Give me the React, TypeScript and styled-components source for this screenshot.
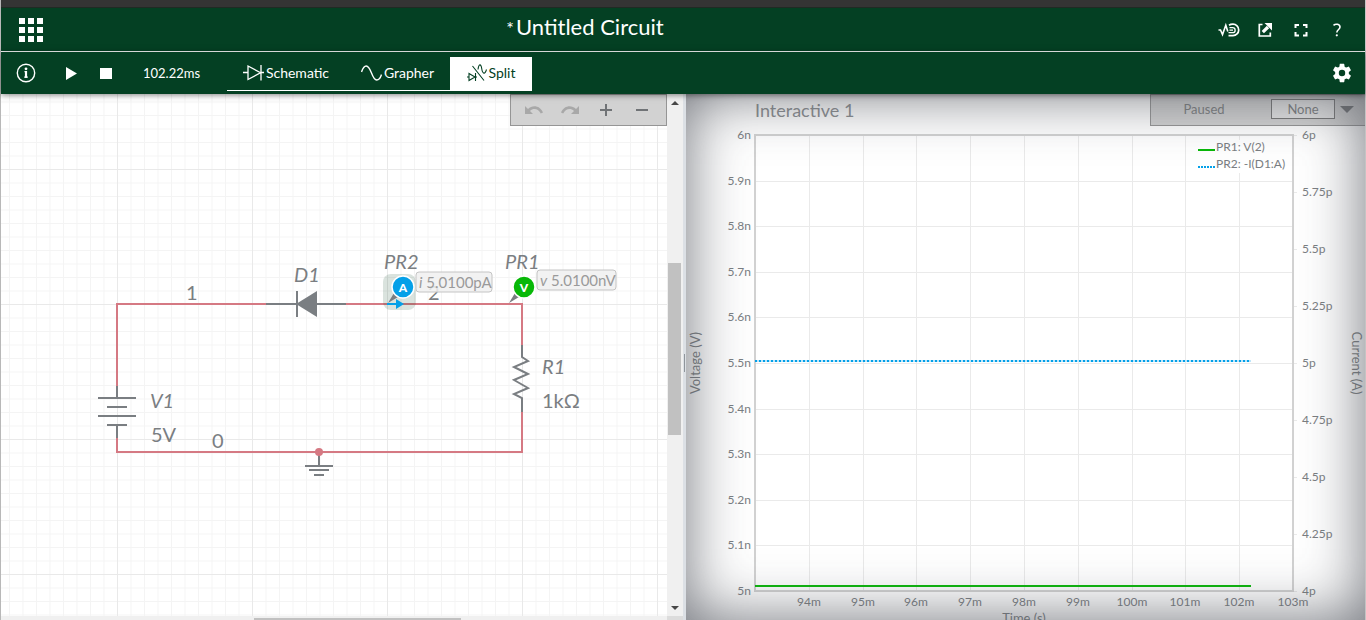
import React, { useLayoutEffect, useRef, useState } from "react";
import styled, { createGlobalStyle, css } from "styled-components";

const GREEN = "#044023";
const INK = "#7a7e82";
const WIRE = "#d57983";
const FONT = '"Lato", "Liberation Sans", sans-serif';

const GlobalStyle = createGlobalStyle`
  * { box-sizing: border-box; }
  html, body, #root { height: 100%; margin: 0; }
  body { font-family: ${FONT}; overflow: hidden; background: #fff; }
  button, select { font-family: inherit; }
`;

const Page = styled.div`
  display: flex;
  flex-direction: column;
  height: 100vh;
  border-left: 1px solid #b8b8b8;
  border-right: 1px solid #c4c4c4;
`;

const WindowEdge = styled.div`
  flex: none;
  height: 8px;
  background: #343434;
  border-bottom: 1px solid #202a24;
`;

const Header = styled.header`
  flex: none;
  display: flex;
  align-items: center;
  height: 44px;
  background: ${GREEN};
  border-bottom: 1px solid #fff;
  color: #fff;
`;

const IconButton = styled.button<{ $w?: number }>`
  display: flex;
  align-items: center;
  justify-content: center;
  flex: none;
  width: ${(p) => p.$w ?? 36}px;
  height: 30px;
  padding: 0;
  border: 0;
  background: none;
  color: inherit;
`;

const Title = styled.h1`
  flex: 1;
  display: flex;
  justify-content: center;
  align-items: baseline;
  gap: 2px;
  margin: 0;
  font-size: 22px;
  line-height: 28px;
  font-weight: 400;
  padding-bottom: 4px;
`;

const Unsaved = styled.span`
  font-size: 18px;
`;

const HeaderActions = styled.nav`
  display: flex;
  justify-content: flex-end;
  width: 256px;
  padding-right: 10px;
`;

const Toolbar = styled.div`
  flex: none;
  display: flex;
  align-items: center;
  height: 42px;
  background: ${GREEN};
  color: #fff;
  position: relative;
  z-index: 3;
  box-shadow: 0 1px 6px rgba(0, 0, 0, 0.5);
`;

const RunTime = styled.output`
  width: 106px;
  padding-left: 22px;
  font-size: 13px;
  line-height: 20px;
`;

const Tabs = styled.div`
  display: flex;
  height: 34px;
  margin-top: 2px;
`;

const Tab = styled.button<{ $active?: boolean; $w: number }>`
  display: flex;
  align-items: center;
  justify-content: center;
  gap: 2px;
  width: ${(p) => p.$w}px;
  padding: 0 0 2px;
  border: 0;
  border-bottom: 1px solid #fff;
  font-size: 14px;
  line-height: 20px;
  ${(p) =>
    p.$active
      ? css`
          background: #fff;
          color: ${GREEN};
        `
      : css`
          background: none;
          color: #fff;
        `}
`;

const Spacer = styled.div`
  flex: 1;
`;

const Workspace = styled.main`
  flex: 1;
  min-height: 0;
  display: grid;
  grid-template-columns: minmax(0, 682fr) 3px minmax(0, 679fr);
`;

const SchematicPane = styled.section`
  position: relative;
  display: grid;
  grid-template-columns: minmax(0, 1fr) 16px;
  grid-template-rows: minmax(0, 1fr) 4px;
`;

const Canvas = styled.svg`
  display: block;
  width: 100%;
  height: 100%;
`;

const FloatingTools = styled.div`
  position: absolute;
  top: 0;
  right: 16px;
  display: flex;
  height: 32px;
  padding: 0 6px 0 5px;
  background: #d2d2d2;
  border: 1px solid #959595;
  color: #707376;
`;

const VerticalTrack = styled.div`
  display: flex;
  flex-direction: column;
  align-items: center;
  padding-right: 1px;
  background: #f0f0f0;
`;

const ScrollArrow = styled.button`
  display: flex;
  align-items: center;
  justify-content: center;
  width: 14px;
  height: 17px;
  padding: 0;
  border: 0;
  background: none;
  color: #484848;
`;

const ScrollGap = styled.div<{ $grow: number }>`
  flex: ${(p) => p.$grow} 1 0;
`;

const VerticalThumb = styled.div`
  flex: 172 1 0;
  width: 13px;
  background: #c1c1c1;
`;

const HorizontalTrack = styled.div`
  display: flex;
  padding-top: 2px;
  background: #f0f0f0;
`;

const HorizontalThumb = styled.div`
  flex: 207 1 0;
  background: #c1c1c1;
`;

const ScrollCorner = styled.div`
  background: #dcdcdc;
`;

const Splitter = styled.div`
  display: flex;
  align-items: center;
  justify-content: center;
  background: #dce0e5;
`;

const SplitterGrip = styled.div`
  width: 1px;
  height: 18px;
  margin-bottom: -12px;
  background: #8f959b;
`;

const GraphPane = styled.section`
  position: relative;
  overflow: hidden;
  &::after {
    content: "";
    position: absolute;
    inset: 0;
    z-index: 2;
    pointer-events: none;
    box-shadow: inset 0 0 60px rgba(85, 88, 96, 0.85);
  }
`;

const GraphTools = styled.div`
  position: absolute;
  top: 0;
  right: 0;
  display: flex;
  align-items: center;
  width: 215px;
  height: 32px;
  padding-bottom: 2px;
  background: #d2d2d2;
  border: 1px solid #959595;
  border-right: 0;
  color: #7c7e80;
  font-size: 13px;
`;

const Status = styled.span`
  width: 120px;
  padding-right: 14px;
  text-align: center;
`;

const CursorSelect = styled.select`
  appearance: none;
  width: 64px;
  height: 20px;
  margin: 0 5px 0 0;
  padding: 0;
  border: 1px solid #777;
  border-radius: 0;
  background: #e6e6e6;
  color: #7c7e80;
  font-size: 13px;
  line-height: 18px;
  text-align: center;
  text-align-last: center;
`;

const Label = styled.text<{ $size: number; $italic?: boolean; $fill?: string }>`
  font-family: ${FONT};
  font-size: ${(p) => p.$size}px;
  font-style: ${(p) => (p.$italic ? "italic" : "normal")};
  fill: ${(p) => p.$fill ?? INK};
`;

const AppsIcon = () => (
  <svg width="24" height="24" viewBox="0 0 24 24" fill="currentColor">
    {[0, 9, 18].map((y) => [0, 9, 18].map((x) => <rect key={`${x}-${y}`} x={x} y={y} width="6" height="6" />))}
  </svg>
);

const InfoIcon = () => (
  <svg width="20" height="20" viewBox="0 0 20 20" fill="none" stroke="currentColor">
    <circle cx="10" cy="10" r="8.7" strokeWidth="1.4" />
    <path d="M8.500 8.700H10V14.200M8.200 14.200H11.800" strokeWidth="1.300" />
    <path d="M10 8V14.800" strokeWidth="2.200" />
    <circle cx="10" cy="5.800" r="1.400" fill="currentColor" stroke="none" />
  </svg>
);

const DiodeIcon = () => (
  <svg width="21" height="18" viewBox="0 0 21 18" fill="none" stroke="currentColor" strokeWidth="1.3">
    <path d="M0 8.5h5M18 8.5h3M5 2v13.5L17.5 8.7zM18 1v15.5" />
  </svg>
);

const SineIcon = () => (
  <svg width="21" height="18" viewBox="0 0 21 18" fill="none" stroke="currentColor" strokeWidth="1.4">
    <path d="M0.5 8C2 3.500 3.500 2 5.200 2C10.500 2 10.500 16 15.700 16C17.500 16 19.500 14 20.500 10.500" />
  </svg>
);

const SplitIcon = () => (
  <svg width="20" height="18" viewBox="0 0 20 18" fill="none" stroke="currentColor" strokeWidth="1.100">
    <path d="M0 13h2M2 9.500v7L8 13zM8.500 9v8M8.500 13h1.500M5.500 2L17 16.500" />
    <path d="M11 5.500C11.800 -0.500 14 -0.500 14.700 4.500C15.500 10 18 11 19.500 5.500" />
  </svg>
);

const MathIcon = () => (
  <svg width="22" height="16" viewBox="0 0 22 16" fill="none" stroke="currentColor" strokeWidth="1.600">
    <path d="M0.500 8H2.500L4.500 12.500L7.800 3.200L9.800 9.500" />
    <path d="M11 3.200C12 2.500 13.500 2.200 15 2.200a5.700 5.700 0 0 1 0 11.400H10.500" strokeWidth="1.700" />
    <path d="M11.500 5.600H14.600a2.500 2.500 0 0 1 0 5.100H10.500M11.500 8.200H15" strokeWidth="1.300" />
  </svg>
);

const ExportIcon = () => (
  <svg width="16" height="16" viewBox="0 0 16 16" fill="none" stroke="currentColor" strokeWidth="1.700">
    <path d="M5.500 2.500H2.300v11.500h11V10.500" />
    <path d="M5.800 10.200L11 5" strokeWidth="3.200" />
    <path d="M7.500 1H15V8.500z" fill="currentColor" stroke="none" />
  </svg>
);

const FullscreenIcon = () => (
  <svg width="14" height="14" viewBox="0 0 14 14" fill="none" stroke="currentColor" strokeWidth="2">
    <path d="M1.500 5V2H5M9 2h3.500v3M12.500 9v3.500H9M5 12.500H1.500V9" />
  </svg>
);

const HelpIcon = () => (
  <svg width="10" height="14" viewBox="0 0 10 14" fill="none" stroke="currentColor" strokeWidth="1.600">
    <path d="M1.500 2.300C3.500 0.600 8 0.800 8 4C8 6.500 5 6.500 4.800 9.500" />
    <circle cx="4.800" cy="12.300" r="1.100" fill="currentColor" stroke="none" />
  </svg>
);

const GearIcon = () => (
  <svg width="22" height="22" viewBox="0 0 24 24" fill="currentColor">
    <path d="M19.430 12.980c.04-.32.07-.64.07-.98s-.03-.66-.07-.98l2.110-1.650c.19-.15.24-.42.12-.64l-2-3.460c-.12-.22-.39-.3-.61-.22l-2.490 1c-.52-.4-1.080-.73-1.690-.98l-.38-2.650A.488.488 0 0 0 14 2h-4c-.25 0-.46.18-.49.42l-.38 2.650c-.61.25-1.170.59-1.690.98l-2.490-1c-.23-.09-.49 0-.61.22l-2 3.460c-.13.22-.07.49.12.64l2.110 1.650c-.04.32-.07.65-.07.98s.03.66.07.98l-2.110 1.650c-.19.15-.24.42-.12.64l2 3.460c.12.22.39.3.61.22l2.490-1c.52.4 1.080.73 1.690.98l.38 2.650c.03.24.24.42.49.42h4c.25 0 .46-.18.49-.42l.38-2.650c.61-.25 1.170-.59 1.690-.98l2.490 1c.23.09.49 0 .61-.22l2-3.460c.12-.22.07-.49-.12-.64zM12 15.500a3.500 3.500 0 1 1 0-7 3.500 3.500 0 0 1 0 7z" />
  </svg>
);

const UndoIcon = ({ flip }: { flip?: boolean }) => (
  <svg width="18" height="12" viewBox="0 0 18 12" fill="#a8a8a8">
    <g transform={flip ? "translate(18 0) scale(-1 1)" : undefined}>
      <path d="M0 2l3 3C7.500 0.500 15 1.500 18 8.500l-2.200.9C13 4.500 8.500 3.800 5 7l3 3H0z" />
    </g>
  </svg>
);

const Probe = ({ x, y, color, letter }: { x: number; y: number; color: string; letter: string }) => (
  <g>
    <path d={`M${x - 15} ${y + 16}L${x - 9} ${y + 6}l4 4z`} fill={INK} />
    <circle cx={x} cy={y} r="11" fill={color} stroke="#fff" strokeWidth="1.500" />
    <Label x={x} y={y + 5} $size={12} $fill="#fff" fontWeight="900" textAnchor="middle">
      {letter}
    </Label>
  </g>
);

const Reading = ({ x, y, w, symbol, value }: { x: number; y: number; w: number; symbol: string; value: string }) => (
  <g>
    <rect x={x} y={y} width={w} height="20" rx="3" fill="#f0f0f0" fillOpacity="0.85" stroke="#c4c4c4" />
    <Label x={x + 3} y={y + 16} $size={15} $fill="#9a9a9a">
      <tspan fontStyle="italic">{symbol}</tspan> {value}
    </Label>
  </g>
);

const Schematic = () => (
  <Canvas role="img" aria-label="Circuit schematic">
    <defs>
      <pattern id="minor" x="116" y="75" width="13.5" height="13.5" patternUnits="userSpaceOnUse">
        <path d="M0 0.500H13.500M0.500 0V13.500" stroke="#f4f4f4" strokeWidth="1" />
      </pattern>
      <pattern id="major" x="116" y="75" width="135" height="135" patternUnits="userSpaceOnUse">
        <path d="M0 0.500H135M0.500 0V135" stroke="#e9e9e9" strokeWidth="1" />
      </pattern>
    </defs>
    <rect width="100%" height="100%" fill="#fff" />
    <rect width="100%" height="100%" fill="url(#minor)" />
    <rect width="100%" height="100%" fill="url(#major)" />

    <path d="M265 210H116V292M116 344V358H521V318M521 251V210H345" fill="none" stroke={WIRE} strokeWidth="2" />
    <g fill="none" stroke={INK} strokeWidth="2">
      <path d="M116 292V304M97 304H135M106 313H126M97 322H135M106 331H126M116 331V344" />
      <path d="M265 210H345M296 197V223" />
      <path d="M521 251V263L527 267L513 273L527 280L513 286L527 294L513 300L521 304V318" />
      <path d="M318 358V372M304 372H332M308 376H328M313 381H323" />
    </g>
    <path d="M295 210L316 197V223z" fill={INK} />
    <circle cx="318" cy="358" r="4" fill={WIRE} />

    <Label x={185} y={206} $size={20}>1</Label>
    <Label x={293} y={188} $size={20} $italic>D1</Label>
    <Label x={427} y={206} $size={20}>2</Label>
    <Label x={211} y={354} $size={20}>0</Label>
    <Label x={149} y={314} $size={20} $italic>V1</Label>
    <Label x={150} y={348} $size={20}>5V</Label>
    <Label x={541} y={280} $size={20} $italic>R1</Label>
    <Label x={541} y={314} $size={20}>1kΩ</Label>
    <Label x={383} y={175} $size={20} $italic>PR2</Label>
    <Label x={504} y={175} $size={20} $italic>PR1</Label>

    <rect x="382" y="180" width="33" height="36" rx="8" fill={GREEN} fillOpacity="0.150" />
    <Probe x={402} y={193} color="#04a0e8" letter="A" />
    <path d="M386 209H395V205L403 210L395 215V211H386z" fill="#04a0e8" />
    <Probe x={523} y={193} color="#08b808" letter="V" />
    <Reading x={415} y={178} w={76} symbol="i" value="5.0100pA" />
    <Reading x={536} y={176} w={79} symbol="v" value="5.0100nV" />
  </Canvas>
);

const T_START = 93;
const T_END = 103;
const T_NOW = 102.22;
const voltageTicks = ["5n", "5.1n", "5.2n", "5.3n", "5.4n", "5.5n", "5.6n", "5.7n", "5.8n", "5.9n", "6n"];
const currentTicks = ["4p", "4.25p", "4.5p", "4.75p", "5p", "5.25p", "5.5p", "5.75p", "6p"];
const timeTicks = [94, 95, 96, 97, 98, 99, 100, 101, 102, 103];

const Grapher = () => {
  const ref = useRef<SVGSVGElement>(null);
  const [size, setSize] = useState({ w: 679, h: 526 });
  useLayoutEffect(() => {
    const el = ref.current;
    if (!el) return;
    const measure = () => setSize({ w: el.clientWidth, h: el.clientHeight });
    measure();
    const observer = new ResizeObserver(measure);
    observer.observe(el);
    return () => observer.disconnect();
  }, []);

  const left = 69;
  const right = size.w - 72;
  const top = 41;
  const bottom = size.h - 29;
  const tx = (t: number) => Math.round(left + ((t - T_START) / (T_END - T_START)) * (right - left));
  const fy = (f: number) => Math.round(bottom - f * (bottom - top));
  const mid = (top + bottom) / 2;

  return (
    <Canvas ref={ref} role="img" aria-label="Voltage and current over time">
      <rect width="100%" height="100%" fill="#fff" />
      <Label x={left} y={23} $size={18} $fill="#8a8d90">Interactive 1</Label>
      <g stroke="#eaeaea" shapeRendering="crispEdges">
        {timeTicks.slice(0, -1).map((t) => (
          <line key={t} x1={tx(t)} x2={tx(t)} y1={top} y2={bottom} strokeWidth="1" />
        ))}
        {voltageTicks.slice(1, -1).map((v, i) => (
          <line key={v} x1={left} x2={right} y1={fy((i + 1) / 10)} y2={fy((i + 1) / 10)} strokeWidth="1" />
        ))}
        {currentTicks.map((c, i) => (
          <line key={c} x1={right} x2={right + 4} y1={fy(i / 8)} y2={fy(i / 8)} strokeWidth="1" />
        ))}
      </g>
      <path d={`M${left} ${bottom}V${top}H${right}V${bottom}z`} fill="none" stroke="#d2d2d2" strokeWidth="2" />
      {voltageTicks.map((v, i) => (
        <Label key={v} x={left - 4} y={fy(i / 10) + 4} $size={12} textAnchor="end">{v}</Label>
      ))}
      {currentTicks.map((c, i) => (
        <Label key={c} x={right + 9} y={fy(i / 8) + 4} $size={12}>{c}</Label>
      ))}
      {timeTicks.map((t) => (
        <Label key={t} x={tx(t)} y={bottom + 15} $size={12} textAnchor="middle">{t}m</Label>
      ))}
      <Label x={(left + right) / 2} y={bottom + 32} $size={13} textAnchor="middle">Time (s)</Label>
      <Label transform={`translate(14 ${mid}) rotate(-90)`} $size={13} textAnchor="middle">Voltage (V)</Label>
      <Label transform={`translate(${size.w - 13} ${mid}) rotate(90)`} $size={13} textAnchor="middle">Current (A)</Label>
      <path d={`M${left} ${fy(0.505)}H${tx(T_NOW)}`} stroke="#bfe6fa" strokeWidth="2" />
      <path d={`M${left} ${fy(0.505)}H${tx(T_NOW)}`} stroke="#04a0e8" strokeWidth="2" strokeDasharray="2 2" />
      <path d={`M${left} ${fy(0.01)}H${tx(T_NOW)}`} stroke="#08b808" strokeWidth="2" />
      <g transform={`translate(${right - 95} 0)`}>
        <rect y="46" width="92" height="33" fill="#fff" />
        <path d="M0 56H17" stroke="#08b808" strokeWidth="2" />
        <path d="M0 73H17" stroke="#04a0e8" strokeWidth="2" strokeDasharray="2 1" />
        <Label x={18} y={57} $size={12}>PR1: V(2)</Label>
        <Label x={18} y={74} $size={12}>PR2: -I(D1:A)</Label>
      </g>
    </Canvas>
  );
};

export default function App() {
  return (
    <Page>
      <GlobalStyle />
      <WindowEdge />
      <Header>
        <IconButton $w={60} aria-label="Apps"><AppsIcon /></IconButton>
        <Title>
          <Unsaved>*</Unsaved>
          <span>Untitled Circuit</span>
        </Title>
        <HeaderActions>
          <IconButton aria-label="Math"><MathIcon /></IconButton>
          <IconButton aria-label="Share"><ExportIcon /></IconButton>
          <IconButton aria-label="Full screen"><FullscreenIcon /></IconButton>
          <IconButton aria-label="Help"><HelpIcon /></IconButton>
        </HeaderActions>
      </Header>
      <Toolbar>
        <IconButton $w={50} aria-label="Document info"><InfoIcon /></IconButton>
        <IconButton $w={40} aria-label="Run">
          <svg width="11" height="13"><path d="M0 0L11 6.500L0 13z" fill="currentColor" /></svg>
        </IconButton>
        <IconButton $w={30} aria-label="Stop">
          <svg width="12" height="11"><rect width="12" height="11" fill="currentColor" /></svg>
        </IconButton>
        <RunTime>102.22ms</RunTime>
        <Tabs role="tablist">
          <Tab role="tab" $w={118}><DiodeIcon />Schematic</Tab>
          <Tab role="tab" $w={105}><SineIcon />Grapher</Tab>
          <Tab role="tab" $w={82} $active aria-selected><SplitIcon />Split</Tab>
        </Tabs>
        <Spacer />
        <IconButton $w={46} aria-label="Settings"><GearIcon /></IconButton>
      </Toolbar>
      <Workspace>
        <SchematicPane>
          <Schematic />
          <VerticalTrack>
            <ScrollArrow aria-label="Scroll up"><svg width="8" height="4"><path d="M0 4L4 0L8 4z" fill="currentColor" /></svg></ScrollArrow>
            <ScrollGap $grow={152} />
            <VerticalThumb />
            <ScrollGap $grow={164} />
            <ScrollArrow aria-label="Scroll down"><svg width="8" height="4"><path d="M0 0L4 4L8 0z" fill="currentColor" /></svg></ScrollArrow>
          </VerticalTrack>
          <HorizontalTrack>
            <ScrollGap $grow={253} />
            <HorizontalThumb />
            <ScrollGap $grow={206} />
          </HorizontalTrack>
          <ScrollCorner />
          <FloatingTools>
            <IconButton aria-label="Undo"><UndoIcon /></IconButton>
            <IconButton aria-label="Redo"><UndoIcon flip /></IconButton>
            <IconButton aria-label="Zoom in">
              <svg width="12" height="12"><path d="M0 6H12M6 0V12" stroke="currentColor" strokeWidth="2" /></svg>
            </IconButton>
            <IconButton aria-label="Zoom out">
              <svg width="12" height="12"><path d="M0 6H12" stroke="currentColor" strokeWidth="2" /></svg>
            </IconButton>
          </FloatingTools>
        </SchematicPane>
        <Splitter><SplitterGrip /></Splitter>
        <GraphPane>
          <Grapher />
          <GraphTools>
            <Status>Paused</Status>
            <CursorSelect aria-label="Cursors" defaultValue="None">
              <option>None</option>
            </CursorSelect>
            <svg width="14" height="7"><path d="M0 0H14L7 7z" fill="#707274" /></svg>
          </GraphTools>
        </GraphPane>
      </Workspace>
    </Page>
  );
}
